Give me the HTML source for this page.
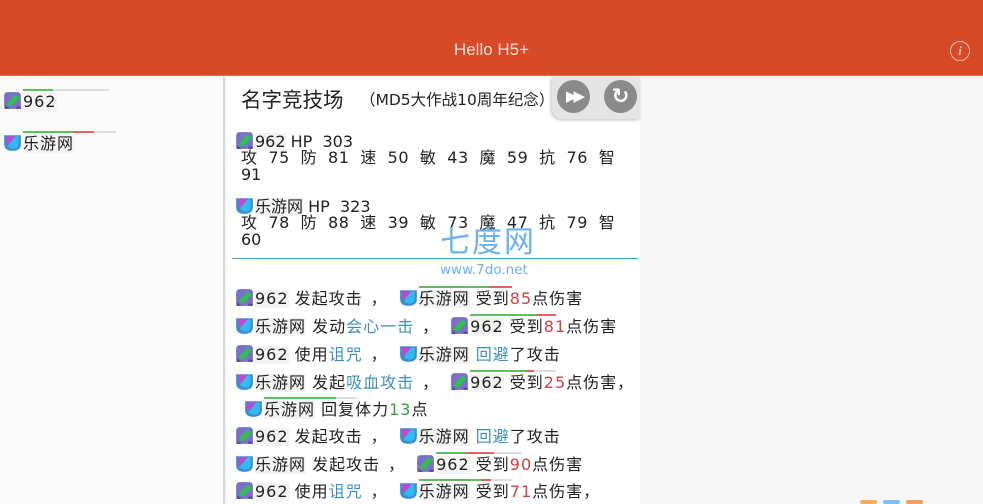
<!DOCTYPE html>
<html><head><meta charset="utf-8">
<style>
*{margin:0;padding:0;box-sizing:border-box}
body{width:983px;height:504px;overflow:hidden;background:#f6f6f6;font-family:"DejaVu Sans","Noto Sans CJK SC",sans-serif;color:#222;position:relative}
.hdr{position:absolute;left:0;top:0;width:983px;height:76px;background:#d64a28;border-bottom:1px solid #e07050}
.hdr .t{position:absolute;left:0;right:0;top:40px;text-align:center;color:#f8e0d8;font-size:17px;font-family:"Liberation Sans",sans-serif}
.info{position:absolute;left:950px;top:41px;width:20px;height:20px;border:1.5px solid #f2c0b0;border-radius:50%;color:#f2c0b0;font:italic bold 13px "Liberation Serif",serif;text-align:center;line-height:17px}
.left{position:absolute;left:0;top:77px;width:225px;height:427px;background:#fafafa;border-right:2px solid #c8dde4}
.mid{position:absolute;left:227px;top:77px;width:413px;height:427px;background:#fff}
.a{position:absolute;white-space:nowrap;font-size:16px;line-height:18px}
.lg{letter-spacing:1px}
.ic{display:inline-block;width:19px;height:19px;vertical-align:-3px;margin-right:1px}
.nm{position:relative;display:inline-block;background:#f3f3f3}
.bar{position:absolute;top:-4px;height:2px}
.b{color:#3a8fb8}.r{color:#d04040}.g{color:#3a9a3a}
.st{word-spacing:5.3px;letter-spacing:0.5px}
.cm{margin:0 11px 0 8px}
</style></head><body>
<svg width="0" height="0" style="position:absolute"><defs>
<symbol id="A" viewBox="0 0 17 17"><rect x="1" y="1" width="15" height="15" rx="3" fill="#7a70c8"/><path d="M3 12 L11 3 L15 6 L7 14 Z" fill="#2fc04a"/><path d="M2 13 L6 16 L1 16Z" fill="#5048a0"/><path d="M12 14h4v2h-4z" fill="#5048a0"/></symbol>
<symbol id="B" viewBox="0 0 17 17"><path d="M1 2 H16 V10 Q16 16 8.5 16 Q1 16 1 10Z" fill="#3a8fd0"/><path d="M3 3 H11 L3 11Z" fill="#d040d0"/><path d="M11 3 H14 V10 Q14 14 8.5 14 L4 12Z" fill="#35b8f0"/></symbol>
</defs></svg>
<div class="hdr"><div class="t">Hello H5+</div><div class="info">i</div></div>
<div class="left">
 <div class="a lg" style="left:3px;top:14px"><svg class="ic"><use href="#A"/></svg><span class="nm">962<span class="bar" style="left:0;width:86px;background:#ddd"></span><span class="bar" style="left:0;width:30px;background:#5cc05c"></span></span></div>
 <div class="a lg" style="left:3px;top:56px"><svg class="ic"><use href="#B"/></svg><span class="nm">乐游网<span class="bar" style="left:0;width:93px;background:#ddd"></span><span class="bar" style="left:0;width:71px;background:#e86060"></span><span class="bar" style="left:0;width:50px;background:#5cc05c"></span></span></div>
</div>
<div class="mid">
 <div class="a" style="left:14px;top:11px;font-size:20.5px;line-height:24px">名字竞技场</div>
 <div class="a" style="left:133px;top:14px;font-size:15.5px">（MD5大作战10周年纪念）</div>
 <div style="position:absolute;left:325px;top:0;width:88px;height:42px;background:#e4e4e4;border-bottom-left-radius:10px;box-shadow:-1px 1px 3px rgba(0,0,0,.25)"></div>
 <div style="position:absolute;left:330px;top:3px;width:33px;height:33px;border-radius:50%;background:#8a8a8a;color:#fff;font-size:15px;text-align:center;line-height:33px;letter-spacing:-4px">▶▶</div>
 <div style="position:absolute;left:377px;top:3px;width:33px;height:33px;border-radius:50%;background:#8a8a8a;color:#fff;font-size:21px;font-weight:bold;text-align:center;line-height:33px">↻</div>
 <div class="a" style="left:8px;top:54px"><svg class="ic"><use href="#A"/></svg><span class="nm">962</span> HP&nbsp; 303</div>
 <div class="a st" style="left:14px;top:72px">攻 75 防 81 速 50 敏 43 魔 59 抗 76 智</div>
 <div class="a" style="left:14px;top:89px">91</div>
 <div class="a" style="left:8px;top:119px"><svg class="ic"><use href="#B"/></svg><span class="nm">乐游网</span> HP&nbsp; 323</div>
 <div class="a st" style="left:14px;top:137px">攻 78 防 88 速 39 敏 73 魔 47 抗 79 智</div>
 <div class="a" style="left:14px;top:154px">60</div>
 <div class="a" style="left:213px;top:150px;font-size:30px;line-height:32px;color:#6ab2ee;letter-spacing:2px">七度网</div>
 <div class="a" style="left:213px;top:184px;font-size:13.5px;color:#6ab2ee">www.7do.net</div>
 <div style="position:absolute;left:5px;top:181px;width:406px;height:1px;background:#4aa0c8"></div>

 <div class="a lg" style="left:8px;top:211px"><svg class="ic"><use href="#A"/></svg><span class="nm">962</span> 发起攻击<span class="cm">，</span><svg class="ic"><use href="#B"/></svg><span class="nm">乐游网<span class="bar" style="left:0;width:93px;background:#e86060"></span><span class="bar" style="left:0;width:70px;background:#5cc05c"></span></span> 受到<span class="r">85</span>点伤害</div>
 <div class="a lg" style="left:8px;top:239px"><svg class="ic"><use href="#B"/></svg><span class="nm">乐游网</span> 发动<span class="b">会心一击</span><span class="cm">，</span><svg class="ic"><use href="#A"/></svg><span class="nm">962<span class="bar" style="left:0;width:86px;background:#e86060"></span><span class="bar" style="left:0;width:66px;background:#5cc05c"></span></span> 受到<span class="r">81</span>点伤害</div>
 <div class="a lg" style="left:8px;top:267px"><svg class="ic"><use href="#A"/></svg><span class="nm">962</span> 使用<span class="b">诅咒</span><span class="cm">，</span><svg class="ic"><use href="#B"/></svg><span class="nm">乐游网</span> <span class="b">回避</span>了攻击</div>
 <div class="a lg" style="left:8px;top:295px"><svg class="ic"><use href="#B"/></svg><span class="nm">乐游网</span> 发起<span class="b">吸血攻击</span><span class="cm">，</span><svg class="ic"><use href="#A"/></svg><span class="nm">962<span class="bar" style="left:0;width:86px;background:#ddd"></span><span class="bar" style="left:0;width:64px;background:#e86060"></span><span class="bar" style="left:0;width:56px;background:#5cc05c"></span></span> 受到<span class="r">25</span>点伤害，</div>
 <div class="a lg" style="left:17px;top:322px"><svg class="ic"><use href="#B"/></svg><span class="nm">乐游网<span class="bar" style="left:0;width:93px;background:#ddd"></span><span class="bar" style="left:0;width:72px;background:#5cc05c"></span></span> 回复体力<span class="g">13</span>点</div>
 <div class="a lg" style="left:8px;top:349px"><svg class="ic"><use href="#A"/></svg><span class="nm">962</span> 发起攻击<span class="cm">，</span><svg class="ic"><use href="#B"/></svg><span class="nm">乐游网</span> <span class="b">回避</span>了攻击</div>
 <div class="a lg" style="left:8px;top:377px"><svg class="ic"><use href="#B"/></svg><span class="nm">乐游网</span> 发起攻击<span class="cm">，</span><svg class="ic"><use href="#A"/></svg><span class="nm">962<span class="bar" style="left:0;width:86px;background:#ddd"></span><span class="bar" style="left:0;width:58px;background:#e86060"></span><span class="bar" style="left:0;width:30px;background:#5cc05c"></span></span> 受到<span class="r">90</span>点伤害</div>
 <div class="a lg" style="left:8px;top:404px"><svg class="ic"><use href="#A"/></svg><span class="nm">962</span> 使用<span class="b">诅咒</span><span class="cm">，</span><svg class="ic"><use href="#B"/></svg><span class="nm">乐游网<span class="bar" style="left:0;width:93px;background:#ddd"></span><span class="bar" style="left:0;width:72px;background:#e86060"></span><span class="bar" style="left:0;width:62px;background:#5cc05c"></span></span> 受到<span class="r">71</span>点伤害，</div>
</div>
<div style="position:absolute;left:860px;top:500px;width:17px;height:4px;background:#f0b060;border-radius:2px"></div>
<div style="position:absolute;left:883px;top:500px;width:17px;height:4px;background:#80c0f0;border-radius:2px"></div>
<div style="position:absolute;left:906px;top:500px;width:17px;height:4px;background:#f0a060;border-radius:2px"></div>
</body></html>
